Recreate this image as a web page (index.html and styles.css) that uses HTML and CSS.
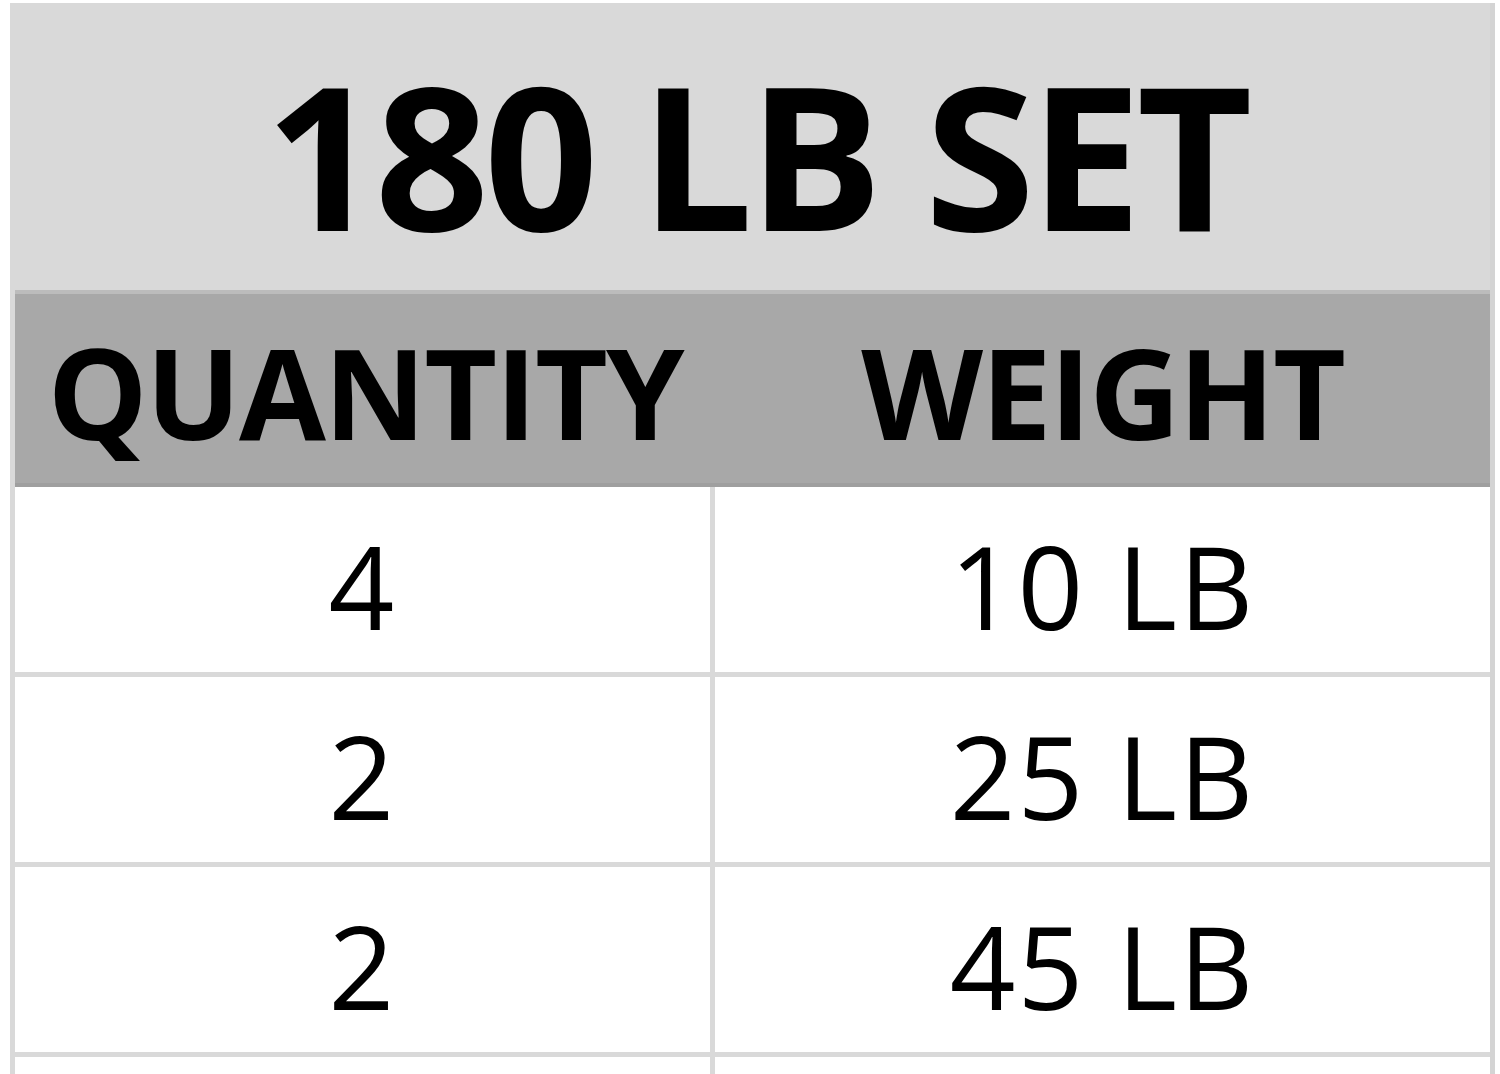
FILE: index.html
```html
<!DOCTYPE html>
<html lang="en">
<head>
<meta charset="utf-8">
<title>180 LB SET</title>
<link rel="stylesheet" href="styles.css">
</head>
<body>
<div class="sheet">
  <div class="title">180 LB SET</div>
  <div class="head">
    <div class="hcell">QUANTITY</div>
    <div class="hcell">WEIGHT</div>
  </div>
  <div class="row">
    <div class="cell c1">4</div>
    <div class="cell">10 LB</div>
  </div>
  <div class="row">
    <div class="cell c1">2</div>
    <div class="cell">25 LB</div>
  </div>
  <div class="row">
    <div class="cell c1">2</div>
    <div class="cell">45 LB</div>
  </div>
  <div class="row last">
    <div class="cell c1"></div>
    <div class="cell"></div>
  </div>
</div>
</body>
</html>
```
FILE: styles.css
```css
html, body {
  margin: 0;
  padding: 0;
  background: #ffffff;
  overflow: hidden;
}
body {
  width: 1500px;
  height: 1074px;
  font-family: "Open Sans", "Liberation Sans", sans-serif;
  color: #000;
}
.sheet {
  margin: 3px 0 0 10px;
  width: 1485px;
  border-left: 5px solid #d9d9d9;
  border-right: 5px solid #d4d4d4;
  box-sizing: border-box;
}
.title {
  background: #d9d9d9;
  height: 287px;
  box-sizing: border-box;
  padding-top: 51px;
  padding-left: 8px;
  font-size: 200px;
  line-height: 200px;
  font-weight: 700;
  text-align: center;
  letter-spacing: -5px;
}
.head {
  display: grid;
  grid-template-columns: 700px 1fr;
  background: #a8a8a8;
  border-top: 4px solid #bcbcbc;
  border-bottom: 4px solid #9f9f9f;
  height: 197px;
  box-sizing: border-box;
}
.hcell {
  font-size: 126px;
  line-height: 126px;
  font-weight: 700;
  text-align: center;
  padding-top: 34px;
  letter-spacing: -2px;
}
.row {
  display: grid;
  grid-template-columns: 700px 1fr;
  border-bottom: 5px solid #d9d9d9;
  height: 190px;
  box-sizing: border-box;
}
.row.last {
  height: 17px;
  border-bottom: 0;
}
.cell {
  font-size: 115px;
  line-height: 115px;
  text-align: center;
  padding-top: 41px;
  letter-spacing: 2px;
}
.c1 {
  border-right: 5px solid #d9d9d9;
}
```
